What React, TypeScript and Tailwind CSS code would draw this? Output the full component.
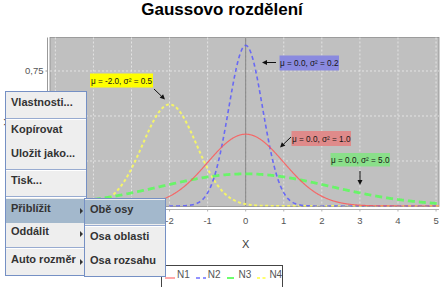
import React from "react";

// chart scale, in page pixels
const X0 = 245.7;
const XU = 38.07;
const Y0 = 206;
const YU = 180;
const PLOT = { left: 50, top: 37.5, right: 439, bottom: 206.5 };

type Series = { name: string; mu: number; s2: number; color: string; width: number; dash?: string };

const SERIES: Series[] = [
  { name: "N1", mu: 0, s2: 1.0, color: "#ff5555", width: 1.2 },
  { name: "N2", mu: 0, s2: 0.2, color: "#5555ff", width: 1.6, dash: "4 3" },
  { name: "N3", mu: 0, s2: 5.0, color: "#55ff55", width: 2.8, dash: "7 4" },
  { name: "N4", mu: -2, s2: 0.5, color: "#ffff55", width: 2, dash: "3 2.5" },
];

const NOTES = [
  { text: "μ = -2.0, σ² = 0.5", x: 90, y: 73.5, w: 63, h: 14, fill: "#ffff00", arrow: [154, 89, 165, 99.5] },
  { text: "μ = 0.0, σ² = 0.2", x: 279.5, y: 55.5, w: 59.5, h: 15, fill: "#8a8adf", arrow: [276, 62.5, 262, 62.5] },
  { text: "μ = 0.0, σ² = 1.0", x: 291.5, y: 131, w: 59.5, h: 15, fill: "#df8a8a", arrow: [291, 137, 280, 147.5] },
  { text: "μ = 0.0, σ² = 5.0", x: 330.5, y: 153, w: 59.5, h: 13.5, fill: "#8adf8a", arrow: [360, 171, 360, 185] },
];

function gaussPath(mu: number, s2: number) {
  const pts: string[] = [];
  for (let px = PLOT.left; px <= PLOT.right; px += 0.5) {
    const x = (px - X0) / XU;
    const y = Math.exp(-((x - mu) ** 2) / (2 * s2)) / Math.sqrt(2 * Math.PI * s2);
    pts.push(`${px.toFixed(1)},${(Y0 - y * YU).toFixed(2)}`);
  }
  return "M" + pts.join("L");
}

function Arrow({ a }: { a: number[] }) {
  const [x1, y1, x2, y2] = a;
  const ang = Math.atan2(y2 - y1, x2 - x1);
  const len = 5;
  const hw = 2.5;
  const bx = x2 - len * Math.cos(ang);
  const by = y2 - len * Math.sin(ang);
  const p1 = `${bx + hw * Math.sin(ang)},${by - hw * Math.cos(ang)}`;
  const p2 = `${bx - hw * Math.sin(ang)},${by + hw * Math.cos(ang)}`;
  return (
    <g>
      <line x1={x1} y1={y1} x2={bx} y2={by} stroke="#111" strokeWidth={1} />
      <polygon points={`${x2},${y2} ${p1} ${p2}`} fill="#111" />
    </g>
  );
}

function Chart() {
  const xs = [-5, -4, -3, -2, -1, 0, 1, 2, 3, 4, 5];
  const ys = [0, 0.25, 0.5, 0.75];
  return (
    <svg width="446" height="245" viewBox="0 20 446 245" className="block" fontFamily="'Liberation Sans', Arial, sans-serif">
      <defs>
        <clipPath id="plot">
          <rect x={PLOT.left} y={PLOT.top} width={PLOT.right - PLOT.left} height={PLOT.bottom - PLOT.top} />
        </clipPath>
      </defs>
      <rect x={PLOT.left} y={PLOT.top} width={PLOT.right - PLOT.left} height={PLOT.bottom - PLOT.top} fill="#c0c0c0" stroke="#8c8c8c" strokeWidth={0.8} />

      {/* grid */}
      {xs.map((v) => (
        <line key={"gx" + v} x1={X0 + v * XU} y1={PLOT.top} x2={X0 + v * XU} y2={PLOT.bottom} stroke="#ececec" strokeWidth={0.8} strokeDasharray="2 2" />
      ))}
      {ys.slice(1).map((v) => (
        <line key={"gy" + v} x1={PLOT.left} y1={Y0 - v * YU} x2={PLOT.right} y2={Y0 - v * YU} stroke="#ececec" strokeWidth={0.8} strokeDasharray="2 2" />
      ))}
      <line x1={X0} y1={PLOT.top} x2={X0} y2={PLOT.bottom} stroke="#808080" strokeWidth={1} />

      {/* curves, last series underneath */}
      <g clipPath="url(#plot)">
        {[...SERIES].reverse().map((s) => (
          <path key={s.name} d={gaussPath(s.mu, s.s2)} fill="none" stroke={s.color} strokeOpacity={0.82} strokeWidth={s.width} strokeDasharray={s.dash} />
        ))}
      </g>

      {/* annotations */}
      {NOTES.map((n) => (
        <g key={n.text}>
          <rect x={n.x} y={n.y} width={n.w} height={n.h} fill={n.fill} />
          <text x={n.x + n.w / 2} y={n.y + n.h / 2 + 0.5} fontSize={8.2} fill="#151515" textAnchor="middle" dominantBaseline="central">
            {n.text}
          </text>
          <Arrow a={n.arrow} />
        </g>
      ))}

      {/* domain axis */}
      <line x1={PLOT.left} y1={209.5} x2={PLOT.right} y2={209.5} stroke="#b0b0b0" strokeWidth={1} />
      {xs.map((v) => (
        <g key={"tx" + v}>
          <line x1={X0 + v * XU} y1={209.5} x2={X0 + v * XU} y2={211.5} stroke="#b0b0b0" strokeWidth={1} />
          <text x={X0 + v * XU} y={220} fontSize={9.5} fill="#555" textAnchor="middle" dominantBaseline="central">
            {v}
          </text>
        </g>
      ))}
      <text x={X0} y={243.5} fontSize={11} fill="#3a3a3a" textAnchor="middle" dominantBaseline="central">
        X
      </text>

      {/* range axis; the lower tick labels sit under the popup */}
      <line x1={47.5} y1={PLOT.top} x2={47.5} y2={PLOT.bottom} stroke="#9a9a9a" strokeWidth={1} />
      {ys.map((v) => (
        <line key={"ty" + v} x1={45.5} y1={Y0 - v * YU} x2={47.5} y2={Y0 - v * YU} stroke="#9a9a9a" strokeWidth={1} />
      ))}
      <text x={43.5} y={Y0 - 0.75 * YU - 0.5} fontSize={9.5} fill="#555" textAnchor="end" dominantBaseline="central">
        0,75
      </text>
      <text x={8} y={122} fontSize={11} fill="#3a3a3a" textAnchor="middle" dominantBaseline="central" transform="rotate(-90 8 122)">
        Y
      </text>
    </svg>
  );
}

function Legend() {
  return (
    <div className="ml-[161px] flex w-[122px] gap-[6px] border border-[#444] bg-white px-[3px] pt-[3px] pb-[10px]">
      {SERIES.map((s) => (
        <div key={s.name} className="flex items-start gap-[2px]">
          <svg width="10" height="12" className="block shrink-0">
            <line x1="0" y1="9" x2="10" y2="9" stroke={s.color} strokeOpacity={0.85} strokeWidth={Math.min(s.width, 2)} strokeDasharray={s.dash} />
          </svg>
          <span className="text-[10px] leading-[12px] text-[#555]">{s.name}</span>
        </div>
      ))}
    </div>
  );
}

function Separator() {
  return (
    <div className="flex h-[4px] flex-col justify-center">
      <div className="h-[1px] bg-[#98abd0]" />
      <div className="h-[1px] bg-white" />
    </div>
  );
}

function Item({ label, sub, active }: { label: string; sub?: boolean; active?: boolean }) {
  return (
    <div className={`flex h-[23.5px] items-center pl-[5px] pr-[3px] ${active ? "bg-[#a3b8cc]" : ""}`}>
      <span className="pb-[5px] leading-[13px] whitespace-nowrap">{label}</span>
      {sub && <span className="ml-auto h-0 w-0 border-y-[3px] border-l-[3px] border-y-transparent border-l-[#333]" />}
    </div>
  );
}

function PopupMenu() {
  return (
    <>
      <div className="absolute top-[91px] left-[5px] w-[82px] border border-[#7590c4] bg-[#eeeeee] py-[1px] text-[11px] font-bold text-[#333]">
        <Item label="Vlastnosti..." />
        <Separator />
        <Item label="Kopírovat" />
        <Item label="Uložit jako..." />
        <Separator />
        <Item label="Tisk..." />
        <Separator />
        <Item label="Přiblížit" sub active />
        <Item label="Oddálit" sub />
        <Separator />
        <Item label="Auto rozměr" sub />
      </div>
      <div className="absolute top-[198px] left-[84px] w-[82px] border border-[#7590c4] bg-[#eeeeee] py-[1px] text-[11px] font-bold text-[#333]">
        <Item label="Obě osy" active />
        <Separator />
        <Item label="Osa oblasti" />
        <Item label="Osa rozsahu" />
      </div>
    </>
  );
}

export default function App() {
  return (
    <div className="relative h-[287px] w-[446px] overflow-hidden bg-white font-['Liberation_Sans',Arial,sans-serif]">
      <div className="h-[20px] pr-[2px] text-center text-[17px] leading-[20px] font-bold text-black">Gaussovo rozdělení</div>
      <Chart />
      <Legend />
      <PopupMenu />
    </div>
  );
}
